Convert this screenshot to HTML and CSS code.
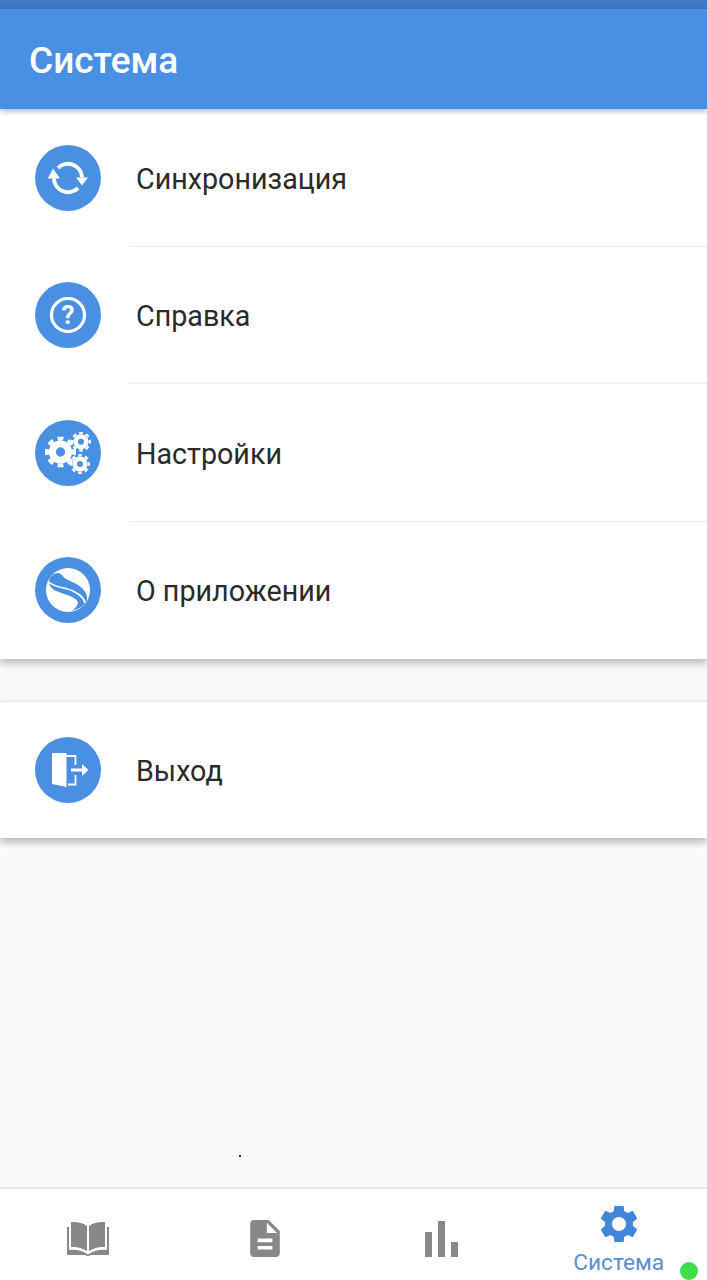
FILE: index.html
```html
<!doctype html>
<html lang="ru">

<head>
	<meta charset="utf-8">
	<meta name="viewport" content="width=device-width, initial-scale=1">
	<title>Система</title>
	<link rel="stylesheet" href="styles.css">
</head>

<body>

	<svg class="defs" width="0" height="0">
		<symbol id="gear" viewBox="0 0 40 40">
			<circle cx="20" cy="20" r="10.5" fill="none" stroke="#fff" stroke-width="9"/>
			<circle cx="20" cy="20" r="17.5" fill="none" stroke="#fff" stroke-width="5" pathLength="16" stroke-dasharray="1.1 0.9" stroke-dashoffset="0.55"/>
		</symbol>
	</svg>

	<div class="app">

		<div class="statusbar"></div>

		<header class="header">Система</header>

		<section class="card">

			<div class="row">
				<svg class="badge" viewBox="0 0 66 66">
					<circle cx="33" cy="33" r="33" fill="#4a90e2"/>
					<path d="M19 33.5A14 14 0 0 0 43 43M47 32.5A14 14 0 0 0 23 23" fill="none" stroke="#fff" stroke-width="4"/>
					<path d="M18 23.5L12.7 33.5H25ZM47 40.5L41 32.5H53Z" fill="#fff"/>
				</svg>
				<span class="label">Синхронизация</span>
			</div>

			<div class="row">
				<svg class="badge" viewBox="0 0 66 66">
					<circle cx="33" cy="33" r="33" fill="#4a90e2"/>
					<circle cx="33" cy="33" r="16.5" fill="none" stroke="#fff" stroke-width="3.2"/>
					<text class="qmark" x="33" y="42" text-anchor="middle">?</text>
				</svg>
				<span class="label">Справка</span>
			</div>

			<div class="row">
				<svg class="badge" viewBox="0 0 66 66">
					<circle cx="33" cy="33" r="33" fill="#4a90e2"/>
					<use href="#gear" x="10" y="16.5" width="31" height="31"/>
					<use href="#gear" x="36" y="11.7" width="20" height="20"/>
					<use href="#gear" x="35" y="34" width="20" height="20"/>
				</svg>
				<span class="label">Настройки</span>
			</div>

			<div class="row">
				<svg class="badge" viewBox="0 0 66 66">
					<circle cx="33" cy="33" r="33" fill="#4a90e2"/>
					<circle cx="33" cy="33" r="22" fill="#fff"/>
					<path d="M14 25C14 20 18 16 23 16C27 16 27 20 33 23C40 26 51 31 52 40C53 46 46 52 37 53.5C42 50 45 46 41 42.5C36 38 24 36 19 33C16 31 14 28 14 25Z" fill="#4a90e2"/>
					<path d="M13.5 25C20 31 30 30 38 34C44 37 49 40 50 46" fill="none" stroke="#fff" stroke-width="1.6"/>
				</svg>
				<span class="label">О приложении</span>
			</div>

		</section>

		<section class="card card-exit">

			<div class="row">
				<svg class="badge" viewBox="0 0 66 66">
					<circle cx="33" cy="33" r="33" fill="#4a90e2"/>
					<path d="M17 16H31.5V50L17 47Z" fill="#fff"/>
					<path d="M31.5 19H40.5V28M40.5 38V47.5H33" fill="none" stroke="#fff" stroke-width="1.8"/>
					<path d="M36 31.5H47V27L53.5 33L47 39V34.5H36Z" fill="#fff"/>
				</svg>
				<span class="label">Выход</span>
			</div>

		</section>

		<div class="spacer"></div>

		<nav class="tabs">

			<div class="tab">
				<svg class="tab-book" viewBox="0 0 44 35">
					<path d="M5 1C11 0.5 17 2 21 5V30C16 26.5 10 25.5 5 26Z M23 5C27 2 33 0.5 39 1V26C34 25.5 28 26.5 23 30Z" fill="#888"/>
					<path d="M1 6V34H17C19 34 20.5 34.5 22 35C23.5 34.5 25 34 27 34H43V6H41V29C34 28 27 29.5 22 33.5C17 29.5 10 28 3 29V6Z" fill="#888"/>
				</svg>
			</div>

			<div class="tab">
				<svg class="tab-doc" viewBox="4 2 16 20">
					<path d="M14 2H6c-1.1 0-2 .9-2 2v16c0 1.1.9 2 2 2h12c1.1 0 2-.9 2-2V8l-6-6zm2 16H8v-2h8v2zm0-4H8v-2h8v2zm-3-5V3.5L18.5 9H13z" fill="#888"/>
				</svg>
			</div>

			<div class="tab">
				<div class="bars">
					<span class="bar bar-mid"></span>
					<span class="bar bar-tall"></span>
					<span class="bar bar-low"></span>
				</div>
			</div>

			<div class="tab tab-active">
				<svg class="tab-gear" viewBox="2.7 2.7 18.6 18.6">
					<path d="M19.14 12.94c.04-.3.06-.61.06-.94 0-.32-.02-.64-.07-.94l2.03-1.58c.18-.14.23-.41.12-.61l-1.92-3.32c-.12-.22-.37-.29-.59-.22l-2.39.96c-.5-.38-1.03-.7-1.62-.94l-.36-2.54c-.04-.24-.24-.41-.48-.41h-3.84c-.24 0-.43.17-.47.41l-.36 2.54c-.59.24-1.13.57-1.62.94l-2.39-.96c-.22-.08-.47 0-.59.22L2.74 8.87c-.12.21-.08.47.12.61l2.03 1.58c-.05.3-.09.63-.09.94s.02.64.07.94l-2.03 1.58c-.18.14-.23.41-.12.61l1.92 3.32c.12.22.37.29.59.22l2.39-.96c.5.38 1.03.7 1.62.94l.36 2.54c.05.24.24.41.48.41h3.84c.24 0 .44-.17.47-.41l.36-2.54c.59-.24 1.13-.56 1.62-.94l2.39.96c.22.08.47 0 .59-.22l1.92-3.32c.12-.22.07-.47-.12-.61l-2.01-1.58zM12 15.6c-1.98 0-3.6-1.62-3.6-3.6s1.62-3.6 3.6-3.6 3.6 1.62 3.6 3.6-1.62 3.6-3.6 3.6z" fill="#4285dc"/>
				</svg>
				<span class="tab-label">Система</span>
			</div>

			<span class="online"></span>

		</nav>

		<span class="speck"></span>

	</div>

</body>

</html>
```

FILE: styles.css
```css
* {
	box-sizing: border-box;
}

html,
body {
	height: 100%;
}

body {
	background-color: #fafafa;
	color: #2a2a2a;
	font-family: Roboto, "Noto Sans", sans-serif;
	margin: 0;
	overflow: hidden;
}

.defs {
	display: block;
	height: 0;
	position: absolute;
}

.app {
	display: flex;
	flex-direction: column;
	height: 1280px;
	position: relative;
}

.statusbar {
	background-color: #4079c6;
	flex: none;
	height: 9px;
}

.header {
	background-color: #4a90e2;
	box-shadow: 0 2px 6px rgba(0, 0, 0, 0.3);
	color: #fff;
	flex: none;
	font-size: 37px;
	font-weight: 500;
	height: 100px;
	line-height: 103px;
	padding-left: 29px;
	position: relative;
	z-index: 1;
}

.card {
	background-color: #fff;
	box-shadow: 0 4px 8px rgba(0, 0, 0, 0.28);
	flex: none;
}

.card-exit {
	border-top: 1px solid #e8e8e8;
	margin-top: 42px;
}

.card-exit .row {
	height: 136px;
}

.row {
	align-items: center;
	display: flex;
	height: 137.5px;
	padding-left: 35px;
	position: relative;
}

.row + .row::before {
	background-color: #ececec;
	content: "";
	height: 1px;
	left: 129px;
	position: absolute;
	right: 0;
	top: -1px;
}

.badge {
	flex: none;
	height: 66px;
	width: 66px;
}

.qmark {
	fill: #fff;
	font-family: Roboto, sans-serif;
	font-size: 26px;
	font-weight: 700;
}

.label {
	font-size: 28.7px;
	margin-left: 35px;
	padding-top: 2px;
}

.spacer {
	flex: 1;
}

.tabs {
	background-color: #fff;
	border-top: 2px solid #e6e6e6;
	display: flex;
	flex: none;
	height: 93px;
	position: relative;
}

.tab {
	align-items: center;
	display: flex;
	flex: 1;
	flex-direction: column;
	justify-content: center;
	padding-top: 7px;
}

.tab-active {
	justify-content: flex-start;
	padding-top: 17px;
}

.tab-book {
	height: 35px;
	width: 44px;
}

.tab-doc {
	height: 37px;
	width: 30px;
}

.bars {
	align-items: flex-end;
	display: flex;
	gap: 6px;
	height: 37px;
}

.bar {
	background-color: #888;
	width: 7px;
}

.bar-mid {
	height: 25px;
}

.bar-tall {
	height: 36px;
}

.bar-low {
	height: 15px;
}

.tab-gear {
	height: 36px;
	width: 36px;
}

.tab-label {
	color: #5b8fd0;
	font-size: 22.7px;
	line-height: 26px;
	margin-top: 8px;
}

.online {
	background-color: #3fdc4c;
	border-radius: 50%;
	height: 18px;
	position: absolute;
	right: 9px;
	top: 73px;
	width: 18px;
}

.speck {
	background-color: #333;
	box-shadow: -7px 0 2px #efefef, 7px 0 2px #efefef;
	height: 2px;
	left: 239px;
	position: absolute;
	top: 1155px;
	width: 2px;
}
```
